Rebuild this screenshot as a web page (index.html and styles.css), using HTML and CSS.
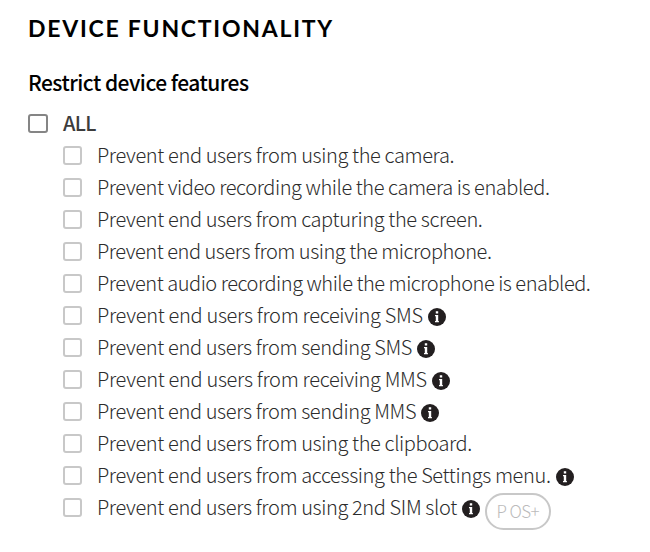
FILE: index.html
```html
<!DOCTYPE html>
<html lang="en">
<head>
<meta charset="utf-8">
<title>Device functionality</title>
<link rel="stylesheet" href="styles.css">
</head>
<body>
<svg class="symbols" aria-hidden="true">
  <symbol id="info" viewBox="0 0 18 18">
    <circle cx="9" cy="9" r="9" fill="#231f20"/>
    <path fill="#fff" d="M7.8 3.2h2.4v2.3H7.8zM7 7h3.2v6h.7v1.3H7V13h.8V8.3H7z"/>
  </symbol>
</svg>
<main class="panel">
  <h1 class="title">DEVICE FUNCTIONALITY</h1>
  <h2 class="subtitle">Restrict device features</h2>
  <label class="row all"><span class="box"></span><span class="text">ALL</span></label>
  <div class="options">
    <label class="row"><span class="box"></span><span class="text">Prevent end users from using the camera.</span></label>
    <label class="row"><span class="box"></span><span class="text snug">Prevent video recording while the camera is enabled.</span></label>
    <label class="row"><span class="box"></span><span class="text">Prevent end users from capturing the screen.</span></label>
    <label class="row"><span class="box"></span><span class="text tight">Prevent end users from using the microphone.</span></label>
    <label class="row"><span class="box"></span><span class="text tight">Prevent audio recording while the microphone is enabled.</span></label>
    <label class="row"><span class="box"></span><span class="text loose">Prevent end users from receiving SMS</span><svg class="info"><use href="#info"/></svg></label>
    <label class="row"><span class="box"></span><span class="text">Prevent end users from sending SMS</span><svg class="info"><use href="#info"/></svg></label>
    <label class="row"><span class="box"></span><span class="text loose">Prevent end users from receiving MMS</span><svg class="info"><use href="#info"/></svg></label>
    <label class="row"><span class="box"></span><span class="text">Prevent end users from sending MMS</span><svg class="info"><use href="#info"/></svg></label>
    <label class="row"><span class="box"></span><span class="text">Prevent end users from using the clipboard.</span></label>
    <label class="row"><span class="box"></span><span class="text">Prevent end users from accessing the Settings menu.</span><svg class="info"><use href="#info"/></svg></label>
    <label class="row"><span class="box"></span><span class="text">Prevent end users from using 2nd SIM slot</span><svg class="info"><use href="#info"/></svg><span class="pill">P OS+</span></label>
  </div>
</main>
</body>
</html>
```
FILE: styles.css
```css
* { box-sizing: border-box; }
body { margin: 0; background: #fff; font-family: "Noto Sans CJK SC", "Noto Sans", sans-serif; color: #2c2c2c; }
.symbols { display: none; }
.panel { min-height: 552px; padding: 13px 0 0 28px; white-space: nowrap; }
.title { margin: 0; height: 30px; font: 700 23px/30px Lato, sans-serif; letter-spacing: 1.75px; color: #000; }
.subtitle { margin: 24px 0 0; height: 30px; font-size: 21px; line-height: 30px; font-weight: 500; letter-spacing: -.53px; color: #000; }
.row { display: flex; align-items: center; height: 32px; }
.box { flex: none; width: 19px; height: 19px; margin: -2px 15px 0 0; border: 2px solid #c8c8c8; border-radius: 3px; }
.text { margin-top: -2px; font-size: 20px; line-height: 32px; font-weight: 300; letter-spacing: -.37px; }
.snug { letter-spacing: -.42px; }
.tight { letter-spacing: -.47px; }
.loose { letter-spacing: -.31px; }
.all { margin-top: 11px; color: #3c3c3c; }
.all .box { width: 20px; border-color: #858585; }
.all .text { font-size: 20px; font-weight: 500; letter-spacing: -.7px; }
.options { padding-left: 35px; }
.info { flex: none; width: 18px; height: 18px; margin: 1px 0 0 5px; }
.pill { width: 66px; height: 37px; margin: 7px 0 0 5px; border: 2px solid #c8c8c8; border-radius: 19px; color: #bbb; font-size: 17px; line-height: 31px; font-weight: 300; letter-spacing: -.6px; text-align: center; }
```
